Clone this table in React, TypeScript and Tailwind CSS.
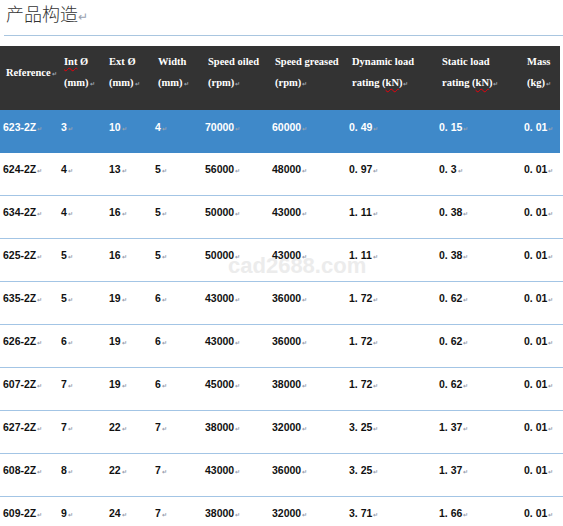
interface Bearing {
    reference: string;
    inner: string;
    outer: string;
    width: string;
    oiled: string;
    greased: string;
    dynamic: string;
    staticLoad: string;
    mass: string;
}

const bearings: Bearing[] = [
    { reference: '623-2Z', inner: '3', outer: '10', width: '4', oiled: '70000', greased: '60000', dynamic: '0. 49', staticLoad: '0. 15', mass: '0. 01' },
    { reference: '624-2Z', inner: '4', outer: '13', width: '5', oiled: '56000', greased: '48000', dynamic: '0. 97', staticLoad: '0. 3', mass: '0. 01' },
    { reference: '634-2Z', inner: '4', outer: '16', width: '5', oiled: '50000', greased: '43000', dynamic: '1. 11', staticLoad: '0. 38', mass: '0. 01' },
    { reference: '625-2Z', inner: '5', outer: '16', width: '5', oiled: '50000', greased: '43000', dynamic: '1. 11', staticLoad: '0. 38', mass: '0. 01' },
    { reference: '635-2Z', inner: '5', outer: '19', width: '6', oiled: '43000', greased: '36000', dynamic: '1. 72', staticLoad: '0. 62', mass: '0. 01' },
    { reference: '626-2Z', inner: '6', outer: '19', width: '6', oiled: '43000', greased: '36000', dynamic: '1. 72', staticLoad: '0. 62', mass: '0. 01' },
    { reference: '607-2Z', inner: '7', outer: '19', width: '6', oiled: '45000', greased: '38000', dynamic: '1. 72', staticLoad: '0. 62', mass: '0. 01' },
    { reference: '627-2Z', inner: '7', outer: '22', width: '7', oiled: '38000', greased: '32000', dynamic: '3. 25', staticLoad: '1. 37', mass: '0. 01' },
    { reference: '608-2Z', inner: '8', outer: '22', width: '7', oiled: '43000', greased: '36000', dynamic: '3. 25', staticLoad: '1. 37', mass: '0. 01' },
    { reference: '609-2Z', inner: '9', outer: '24', width: '7', oiled: '38000', greased: '32000', dynamic: '3. 71', staticLoad: '1. 66', mass: '0. 01' },
];

const cols = 'grid grid-cols-[58px_48px_46px_50px_67px_77px_90px_85px_39px]';

// little word-processor paragraph mark after each cell
const Mark = () => <span className="ml-[1px] text-[6px] text-gray-400 align-baseline">↵</span>;

const Squiggle = ({ children }: { children: string }) => (
    <span className="underline decoration-wavy decoration-red-600 decoration-1 underline-offset-2">{children}</span>
);

const HeadCell = ({ top, bottom }: { top: React.ReactNode; bottom: React.ReactNode }) => (
    <div className="flex flex-col pl-[6px] leading-[21px]">
        <span>{top}</span>
        <span>
            {bottom}
            <Mark />
        </span>
    </div>
);

const BearingTable = () => {
    return (
        <div className="relative w-[563px] h-[526px] overflow-hidden bg-white">
            <div className="pl-[6px] pt-[1px] h-[35px] text-[18px] leading-[24px] text-[#333] font-['Noto_Sans_CJK_SC',sans-serif] font-light">
                产品构造<span className="text-[12px] text-gray-400">↵</span>
            </div>
            <div className="ml-[4px] h-px bg-[#a9c6e0]" />
            <div className="h-[10px]" />

            <div className="absolute left-[228px] top-[249px] text-[22px] font-bold text-[#ececec] font-['Liberation_Sans',sans-serif] select-none">
                cad2688.com
            </div>

            <div className="relative z-10">
                <div className={`${cols} w-[560px] h-[64px] bg-[#333333] text-white items-center pb-[10px] text-[10.5px] font-bold font-['Liberation_Serif',serif]`}>
                    <div className="pl-[6px]">
                        Reference
                        <Mark />
                    </div>
                    <HeadCell top={<><Squiggle>Int</Squiggle> Ø</>} bottom="(mm)" />
                    <div className="-ml-[3px]">
                        <HeadCell top="Ext Ø" bottom="(mm)" />
                    </div>
                    <HeadCell top="Width" bottom="(mm)" />
                    <HeadCell top="Speed oiled" bottom="(rpm)" />
                    <HeadCell top="Speed greased" bottom="(rpm)" />
                    <HeadCell top="Dynamic load" bottom={<>rating (<Squiggle>kN</Squiggle>)</>} />
                    <HeadCell top="Static load" bottom={<>rating (<Squiggle>kN</Squiggle>)</>} />
                    <HeadCell top="Mass" bottom="(kg)" />
                </div>

                {bearings.map((b, index) => {
                    const first = index === 0;
                    return (
                        <div
                            key={b.reference}
                            className={
                                first
                                    ? `${cols} w-[560px] h-[43px] bg-[#3f89c9] text-white pt-[11px]`
                                    : `${cols} w-[563px] h-[43px] border-b border-[#a3c5e5] text-[#111] pt-[10px]`
                            }
                        >
                            {[b.reference, b.inner, b.outer, b.width, b.oiled, b.greased, b.dynamic, b.staticLoad, b.mass].map((v, i) => (
                                <div key={i} className="pl-[3px] text-[10.5px] leading-[12px] font-bold font-['Liberation_Sans',sans-serif] whitespace-nowrap">
                                    {v}
                                    <Mark />
                                </div>
                            ))}
                        </div>
                    );
                })}
            </div>
        </div>
    );
};

export default function App() {
    return <BearingTable />;
}
